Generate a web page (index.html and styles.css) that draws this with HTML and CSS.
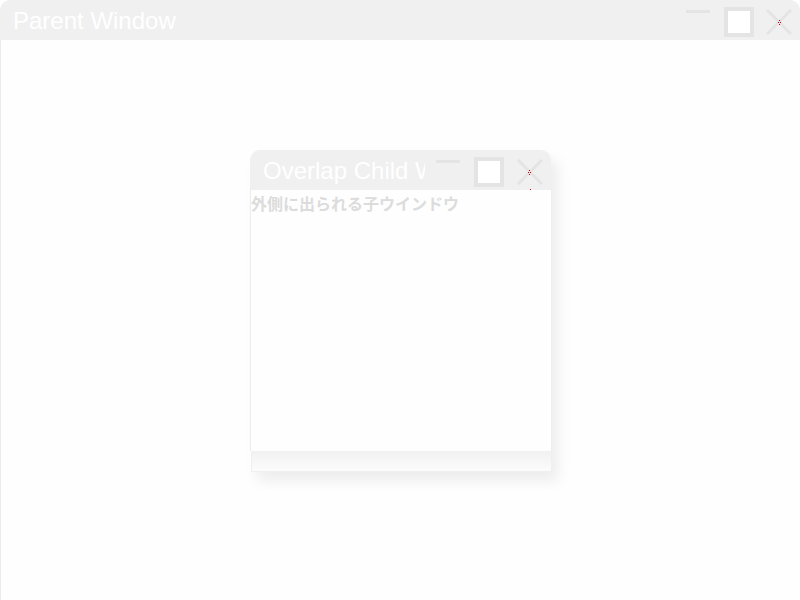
FILE: index.html
```html
<!DOCTYPE html>
<html lang="ja">
<head>
<meta charset="utf-8">
<title>Parent Window</title>
<link rel="stylesheet" href="styles.css">
</head>
<body>
<div class="window parent">
  <div class="titlebar">
    <span class="title">Parent Window</span>
    <div class="controls">
      <span class="btn-min"></span>
      <span class="btn-max"></span>
      <svg class="btn-close" width="26" height="26" viewBox="0 0 26 26">
        <path d="M1 1 L25 25 M25 1 L1 25" stroke="#e4e4e4" stroke-width="3" fill="none"/>
        <rect x="13" y="11" width="1" height="1" fill="#c00"/>
        <rect x="12" y="13" width="1" height="1" fill="#c00"/>
        <rect x="14" y="13" width="1" height="1" fill="#c00"/>
        <rect x="13" y="15" width="1" height="1" fill="#c00"/>
      </svg>
    </div>
  </div>
  <div class="client"></div>
</div>

<div class="child">
  <div class="titlebar">
    <span class="title">Overlap Child Window</span>
    <div class="controls">
      <span class="btn-min"></span>
      <span class="btn-max"></span>
      <svg class="btn-close" width="26" height="26" viewBox="0 0 26 26">
        <path d="M1 1 L25 25 M25 1 L1 25" stroke="#e4e4e4" stroke-width="3" fill="none"/>
        <rect x="12" y="11" width="1" height="1" fill="#c00"/>
        <rect x="11" y="13" width="1" height="1" fill="#c00"/>
        <rect x="13" y="13" width="1" height="1" fill="#c00"/>
        <rect x="12" y="15" width="1" height="1" fill="#c00"/>
      </svg>
    </div>
    <span class="dot"></span>
  </div>
  <div class="client">
    <p class="label">外側に出られる子ウインドウ</p>
  </div>
  <div class="footer"></div>
</div>
</body>
</html>
```

FILE: styles.css
```css
html, body {
  margin: 0;
  padding: 0;
  width: 800px;
  height: 600px;
  overflow: hidden;
  background: #ffffff;
  font-family: "Liberation Sans", Arial, sans-serif;
}

.window.parent {
  width: 800px;
  height: 600px;
  display: flex;
  flex-direction: column;
}

.titlebar {
  height: 40px;
  flex: none;
  background: #f0f0f0;
  border-radius: 10px 10px 0 0;
  display: flex;
  align-items: flex-start;
  position: relative;
}

.title {
  color: #ffffff;
  font-size: 24px;
  line-height: 28px;
  margin-top: 7px;
  white-space: nowrap;
  overflow: hidden;
}

.parent .title {
  padding-left: 13px;
  flex: 1;
}

.controls {
  display: flex;
  align-items: flex-start;
  flex: none;
}

.btn-min {
  width: 24px;
  height: 3px;
  background: #e4e4e4;
  margin-top: 10px;
}

.btn-max {
  box-sizing: border-box;
  width: 30px;
  height: 30px;
  border: 4px solid #e4e4e4;
  background: #ffffff;
  margin-top: 7px;
  margin-left: 14px;
}

.btn-close {
  display: block;
  margin-top: 9px;
  margin-left: 12px;
}

.parent .controls {
  padding-right: 8px;
}

.parent .client {
  flex: 1;
  background: #fefefe;
  border-left: 1px solid #ebebeb;
}

/* Child window */
.child {
  position: absolute;
  left: 250px;
  top: 150px;
  width: 301px;
  box-shadow: 7px 9px 14px rgba(0, 0, 0, 0.07);
  border-radius: 10px 10px 0 0;
}

.child .title {
  padding-left: 13px;
  width: 162px;
  flex: none;
}

.child .controls {
  margin-left: 11px;
}

.child .btn-close {
  margin-left: 13px;
}

.child .dot {
  position: absolute;
  left: 280px;
  top: 39px;
  width: 1px;
  height: 1px;
  background: #d00;
}

.child .client {
  height: 261px;
  background: #fefefe;
  border-left: 1px solid #ececec;
}

.label {
  margin: 0;
  padding-top: 2px;
  color: #dcdcdc;
  font-family: "Noto Sans CJK JP", sans-serif;
  font-size: 16px;
  font-weight: bold;
  line-height: 22px;
}

.footer {
  margin-left: 1px;
  width: 301px;
  height: 21px;
  box-sizing: border-box;
  border: 1px solid #efefef;
  border-top: none;
  background: linear-gradient(#f1f1f1, #fcfcfc);
}
```
